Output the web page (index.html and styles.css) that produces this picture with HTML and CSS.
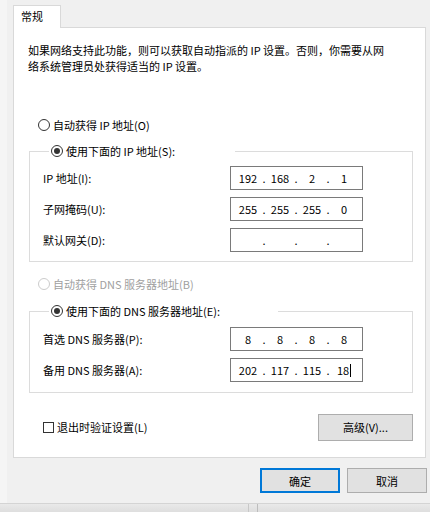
FILE: index.html
```html
<!DOCTYPE html>
<html lang="zh-CN">
<head>
    <meta charset="UTF-8">
    <meta name="viewport" content="width=device-width, initial-scale=1.0">
    <title>Internet 协议版本 4 (TCP/IPv4) 属性</title>
    <link rel="stylesheet" href="styles.css">
</head>
<body>
    <div class="window">
        <div class="tabs">
            <div class="tab">常规</div>
        </div>
        <div class="panel">
            <p class="intro">如果网络支持此功能，则可以获取自动指派的 IP 设置。否则，你需要从网<br>络系统管理员处获得适当的 IP 设置。</p>

            <label class="radio first"><span class="dot"></span>自动获得 IP 地址(O)</label>
            <fieldset class="group group-ip">
                <legend class="radio legend-ip"><span class="dot on"></span>使用下面的 IP 地址(S):</legend>
                <div class="row">
                    <span class="lbl">IP 地址(I):</span>
                    <div class="ip"><span>192</span><i>.</i><span>168</span><i>.</i><span>2</span><i>.</i><span>1</span></div>
                </div>
                <div class="row">
                    <span class="lbl">子网掩码(U):</span>
                    <div class="ip"><span>255</span><i>.</i><span>255</span><i>.</i><span>255</span><i>.</i><span>0</span></div>
                </div>
                <div class="row">
                    <span class="lbl">默认网关(D):</span>
                    <div class="ip"><span></span><i>.</i><span></span><i>.</i><span></span><i>.</i><span></span></div>
                </div>
            </fieldset>

            <label class="radio disabled"><span class="dot"></span>自动获得 DNS 服务器地址(B)</label>
            <fieldset class="group group-dns">
                <legend class="radio legend-dns"><span class="dot on"></span>使用下面的 DNS 服务器地址(E):</legend>
                <div class="row">
                    <span class="lbl">首选 DNS 服务器(P):</span>
                    <div class="ip"><span>8</span><i>.</i><span>8</span><i>.</i><span>8</span><i>.</i><span>8</span></div>
                </div>
                <div class="row">
                    <span class="lbl">备用 DNS 服务器(A):</span>
                    <div class="ip"><span>202</span><i>.</i><span>117</span><i>.</i><span>115</span><i>.</i><span class="focus">18<b class="caret"></b></span></div>
                </div>
            </fieldset>

            <div class="bottom">
                <label class="check"><span class="box"></span>退出时验证设置(L)</label>
                <button class="btn advanced">高级(V)...</button>
            </div>
        </div>
        <div class="actions">
            <button class="btn primary">确定</button>
            <button class="btn">取消</button>
        </div>
    </div>
    <div class="taskbar"><span class="seam"></span></div>
</body>
</html>
```

FILE: styles.css
```css
* {
    box-sizing: border-box;
}
body {
    margin: 0;
    background-color: #f0f0f0;
    font-family: "Noto Sans CJK SC", "Noto Sans", sans-serif;
    font-size: 11px;
    color: #000;
    overflow: hidden;
}
.window {
    height: 503px;
    border-left: 7px solid #f5f5f5;
}
.tabs {
    display: flex;
    padding-top: 5px;
    padding-left: 6px;
}
.tab {
    position: relative;
    z-index: 1;
    width: 48px;
    height: 23px;
    margin-bottom: -1px;
    padding-left: 7px;
    line-height: 20px;
    background-color: white;
    border: 1px solid #d9d9d9;
    border-bottom: none;
}
.panel {
    width: 413px;
    height: 431px;
    margin-left: 6px;
    background-color: white;
    border: 1px solid #d9d9d9;
}
.intro {
    margin: 14px 0 0 14px;
    line-height: 16px;
}
.radio {
    display: flex;
    align-items: center;
    height: 16px;
    line-height: 16px;
    white-space: nowrap;
}
.first {
    margin: 43px 0 0 24px;
}
.dot {
    position: relative;
    width: 12px;
    height: 12px;
    margin-right: 3px;
    border: 1px solid #333;
    border-radius: 50%;
    background-color: white;
}
.dot.on::after {
    content: "";
    position: absolute;
    left: 2px;
    top: 2px;
    width: 6px;
    height: 6px;
    border-radius: 50%;
    background-color: #333;
}
.disabled {
    margin: 14px 0 0 24px;
    color: #a0a0a0;
}
.disabled .dot {
    border-color: #cccccc;
}
.group {
    width: 384px;
    margin: 0 0 0 15px;
    padding: 0 0 9px 13px;
    border: 1px solid #dcdcdc;
    min-width: 0;
}
.group-ip {
    margin-top: 10px;
}
.group-dns {
    margin-top: 11px;
    padding-bottom: 10px;
}
.group legend {
    margin-left: 6px;
    padding: 0 0 0 2px;
    background-color: white;
}
.legend-ip {
    width: 186px;
}
.legend-dns {
    width: 229px;
}
.row {
    display: flex;
    align-items: center;
    height: 24px;
    margin-top: 7px;
}
.group-dns .row:first-of-type {
    margin-top: 8px;
}
.lbl {
    width: 187px;
}
.ip {
    display: flex;
    width: 133px;
    height: 24px;
    padding-left: 4px;
    line-height: 22px;
    border: 1px solid #7a7a7a;
    background-color: white;
}
.ip span {
    width: 26px;
    text-align: center;
}
.ip i {
    width: 6px;
    font-style: normal;
    text-align: center;
}
.focus {
    white-space: nowrap;
}
.caret {
    display: inline-block;
    width: 1px;
    height: 13px;
    margin-left: 1px;
    vertical-align: -2px;
    background-color: #000;
}
.bottom {
    display: flex;
    align-items: center;
    justify-content: space-between;
    height: 26px;
    margin: 21px 12px 0 29px;
}
.check {
    display: flex;
    align-items: center;
}
.box {
    width: 11px;
    height: 11px;
    margin-right: 3px;
    border: 1px solid #333;
}
.btn {
    font-family: inherit;
    font-size: 11px;
    color: #000;
    background-color: #e1e1e1;
    border: 1px solid #adadad;
    padding: 0;
}
.advanced {
    width: 95px;
    height: 27px;
}
.actions {
    display: flex;
    justify-content: flex-end;
    gap: 7px;
    margin: 10px 3px 0 0;
}
.actions .btn {
    width: 80px;
    height: 25px;
}
.primary {
    border-color: #0078d7;
    box-shadow: inset 0 0 0 1px #0078d7;
}
.taskbar {
    position: relative;
    height: 9px;
    border-top: 1px solid #d4d4d4;
    background: linear-gradient(#e9e9e9, #dedede);
}
.seam {
    position: absolute;
    left: 248px;
    top: 0;
    width: 10px;
    height: 9px;
    border-left: 1px solid #c8c8c8;
    border-right: 1px solid #bdbdbd;
}
```
